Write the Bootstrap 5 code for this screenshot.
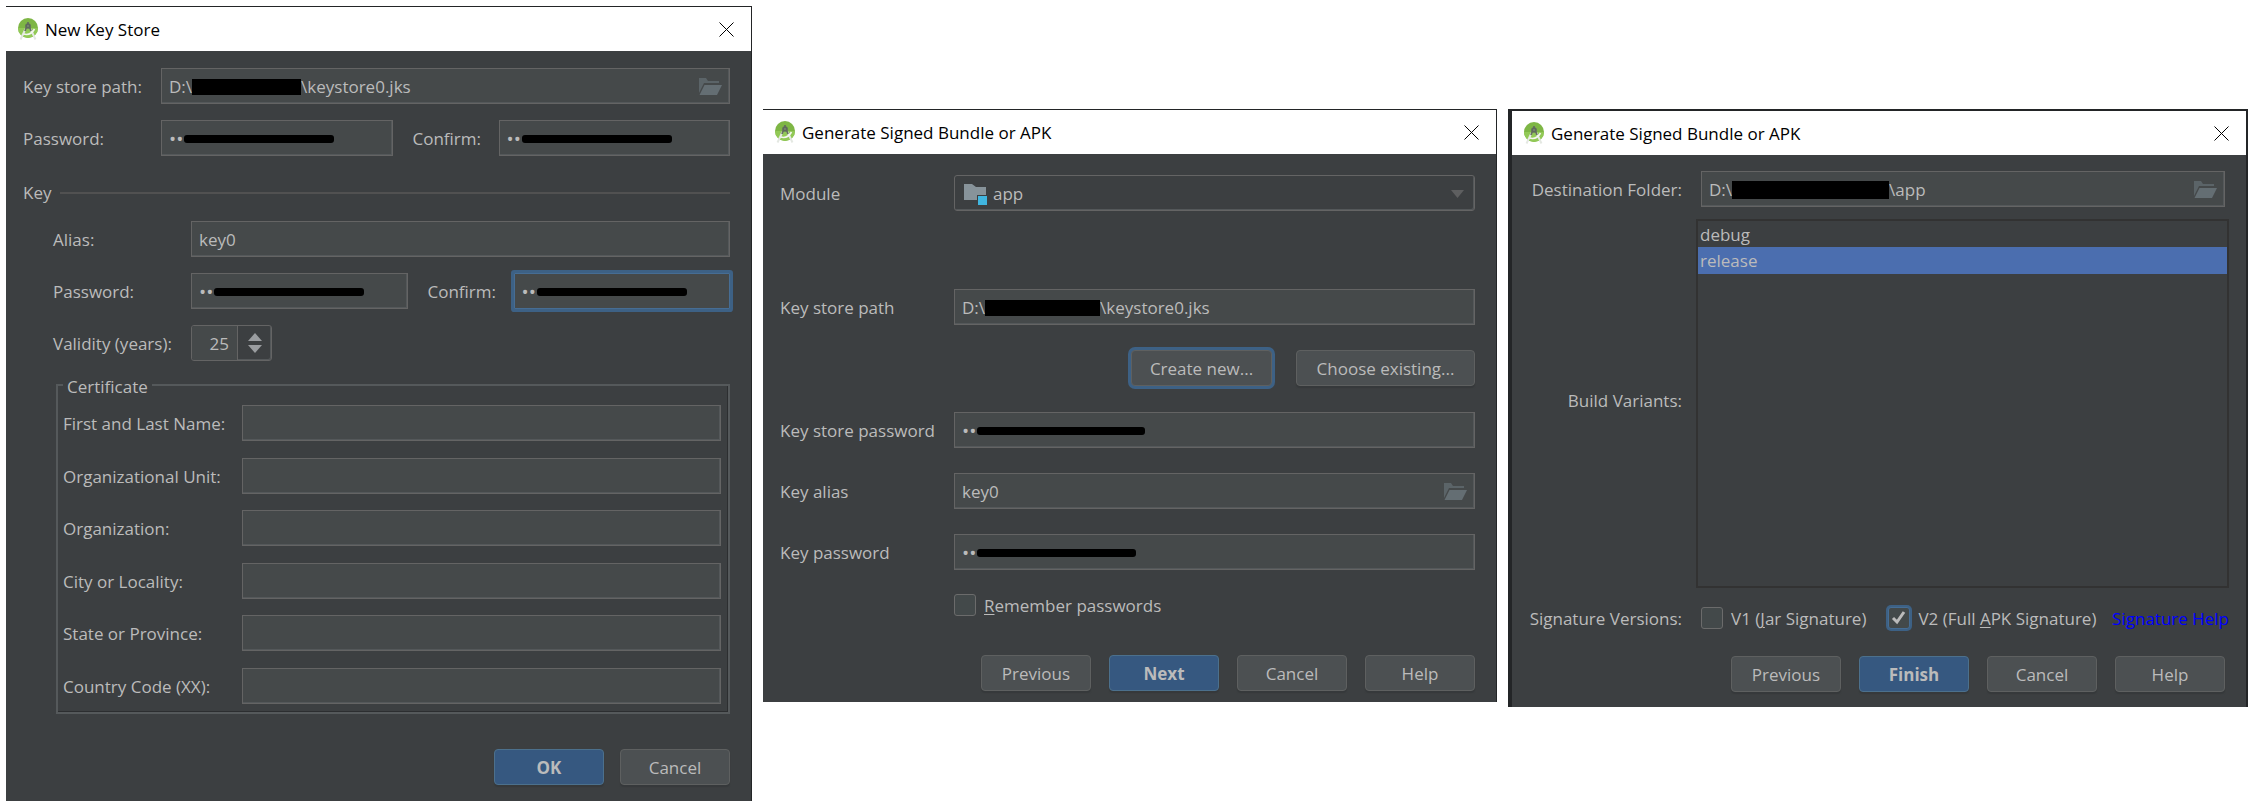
<!DOCTYPE html>
<html lang="en">
<head>
<meta charset="utf-8">
<meta name="viewport" content="width=device-width, initial-scale=1">
<title>Generate Signed Bundle or APK</title>
<link href="https://cdn.jsdelivr.net/npm/bootstrap@5.3.0/dist/css/bootstrap.min.css" rel="stylesheet">
<style>
  body { background: #fff; color: #bbb; font-family: "Open Sans", "Noto Sans", sans-serif; font-size: 17px; line-height: 24px; }
  .desk { display: grid; grid-template-columns: 746fr 734fr 740fr; column-gap: 11px; align-items: start; padding: 6px 7px 4px 6px; }
  .lowered { margin-top: 103px; }
  .dialog { background: #3c3f41; border: 0 solid #232527; border-width: 1px 1px 0 0; min-width: 0; }
  .dialog-thick { border-width: 2px 2px 0 4px; }
  .titlebar { background: #fff; color: #000; height: 44px; padding: 0 17px 0 11px; }
  .titlebar h1 { font-size: 17px; line-height: 24px; font-weight: 400; margin: 0 0 0 6px; padding-top: 1px; }
  .x-btn { border: 0; background: none; padding: 0; display: flex; }
  .pane { padding: 17px 21px 16px 17px; }
  .pane-wizard { padding: 21px 21px 11px 17px; }
  .pane-finish { padding: 16px 0 15px; }
  .gap-row { margin-top: 16px; }
  .gap-mid { margin-top: 25px; }
  .gap-wide { margin-top: 26px; }
  .indent { margin-left: 30px; }
  .lab { flex: none; width: 138px; padding-top: 2px; white-space: nowrap; }
  .lab-confirm { flex: none; width: 106px; padding: 2px 0 0 20px; }
  .lab-cert { width: 179px; }
  .lab-wizard { width: 174px; }
  .lab-end { width: 170px; text-align: right; }
  .field, .field:focus { flex: 1 1 0; min-width: 0; height: 36px; padding: 1px 7px 0; border: 1px solid #646464; border-radius: 0; background: #45494a; color: #bbb; font-size: 17px; line-height: 24px; box-shadow: inset -1px -1px #54585a; }
  .field input { border: 0; padding: 0; background: none; color: inherit; flex: 1 1 0; min-width: 0; outline: 0; }
  .field input[type=password] { flex: 0 0 15px; width: 15px; font-size: 19px; line-height: 24px; }
  .ring, .field.ring { border-color: #466d94; box-shadow: 0 0 0 3px #3d6185; border-radius: 1px; }
  .censor { flex: none; background: #000; height: 16px; width: 109px; }
  .censor-path { width: 115px; }
  .censor-folder { width: 157px; height: 18px; }
  .stroke { flex: none; background: #000; height: 8px; width: 150px; border-radius: 3px; }
  .stroke-store { width: 168px; }
  .stroke-key { width: 159px; }
  .section { margin-top: 25px; }
  .rule { height: 2px; background: #515151; flex: 1; margin-left: 9px; }
  .spin { width: 81px; height: 36px; border: 1px solid #646464; border-radius: 3px; overflow: hidden; box-shadow: inset -1px -1px #54585a; }
  .spin input { width: 46px; border: 0; border-right: 1px solid #646464; padding: 2px 8px 0 0; background: #45494a; color: #bbb; text-align: right; appearance: textfield; -moz-appearance: textfield; }
  .spin input::-webkit-inner-spin-button { appearance: none; -webkit-appearance: none; margin: 0; }
  .spin button { border: 0; background: none; padding: 0; height: 8px; display: flex; }
  .cert { margin: 10px 0 0 33px; border: 2px solid #55595b; padding: 6px 7px 8px 5px; box-shadow: inset -1px -1px #2c2e30; }
  .cert legend { padding: 4px 4px 0; font-size: 17px; line-height: 24px; margin: 0; }
  .cert-rows { min-height: 299px; }
  .btn-ide { width: 110px; height: 36px; padding: 1px 0 0; border: 1px solid #5e6060; border-radius: 4px; background: #4c5052; color: #bbb; font-size: 17px; line-height: 24px; box-shadow: 0 2px 1px #36393b; }
  .btn-main { background: #365880; border-color: #4c708c; font-weight: 700; }
  .btn-new { width: 141px; }
  .btn-new.ring { border-radius: 4px; box-shadow: 0 0 0 3px #3d6185; }
  .btn-old { width: 179px; margin-left: 24px; }
  .btn-row { gap: 18px; }
  .btn-row-two { gap: 16px; margin-top: 35px; }
  .wizard-row { margin-top: 37px; }
  .combo { flex: 1; position: relative; }
  .combo select { width: 100%; height: 36px; padding: 2px 40px 0 38px; border: 1px solid #646464; border-radius: 3px; background: #3c3f41; color: #bbb; font-size: 17px; box-shadow: inset -1px -1px #54585a; }
  .combo .mark-module { position: absolute; left: 10px; top: 8px; }
  .combo .mark-arrow { position: absolute; right: 11px; top: 15px; }
  .after-combo { margin-top: 78px; }
  .tick { flex: none; width: 22px; height: 22px; margin: 0 8px 0 0; border: 1px solid #6b6b6b; background-color: #43494a; }
  .tick.form-check-input[type=checkbox] { border-radius: 3px; }
  .tick + label { padding-top: 2px; }
  .tick.tick:checked { background-color: #43494a; border-color: #466d94; box-shadow: 0 0 0 2px #3d6185; background-size: 20px 20px; background-image: url("data:image/svg+xml,%3Csvg xmlns='http://www.w3.org/2000/svg' viewBox='0 0 20 20'%3E%3Cpath d='M4 10l4 4L15 4' fill='none' stroke='%23bbb' stroke-width='3'/%3E%3C/svg%3E"); }
  .remember { margin-top: 22px; }
  u { text-underline-offset: 2px; text-decoration-thickness: 1px; }
  .inset-field { margin-left: 19px; margin-right: 21px; }
  .variants { flex: 1; margin: 0 17px 0 14px; min-height: 369px; border: 2px solid #323232; border-radius: 0; }
  .variants .list-group-item { border: 0; margin: 0; padding: 2px 2px 1px; background: none; color: #bbb; border-radius: 0; }
  .variants .list-group-item.active { background: #4b6eaf; color: #bbb; }
  .signatures { margin: 17px 17px 0 0; white-space: nowrap; }
  .signatures a { color: #00f; text-decoration: none; padding-top: 2px; }
  .first-tick { margin-left: 19px; }
  .next-tick { margin-left: 22px; }
</style>
</head>
<body>
<svg width="0" height="0" class="position-absolute" aria-hidden="true">
  <symbol id="studio" viewBox="0 0 22 24">
    <circle cx="11" cy="11" r="10" fill="#7eb645"/>
    <path d="M1 11a10 10 0 0 0 20 0z" fill="#92c956"/>
    <path d="M8.500 12L3.500 22.500M13.500 12l5 10.500" stroke="#e4e8e2" stroke-width="2" fill="none"/>
    <path d="M6.500 17q7 2 11-5" stroke="#f4f7f1" stroke-width="1.600" fill="none"/>
    <path d="M11 5v3M9.500 10l-1.500 4M12.500 10l1.500 4" stroke="#66705f" stroke-width="1.800"/>
    <circle cx="11" cy="9" r="2.800" fill="#5f6a5d"/>
    <circle cx="11" cy="9" r=".9" fill="#7d8c74"/>
  </symbol>
  <symbol id="close" viewBox="0 0 15 15"><path d="M.5.5l14 14M14.500.5l-14 14" stroke="#000" stroke-width="1"/></symbol>
  <symbol id="folder" viewBox="0 0 23 17">
    <path d="M0 0h7l2 3h11v2H5L0 15z" fill="#5b6468"/>
    <path d="M5.500 7H23l-5 10H.5z" fill="#646e73"/>
  </symbol>
</svg>

<main class="desk">
  <form class="dialog">
    <header class="titlebar d-flex align-items-center">
      <svg width="22" height="24" aria-hidden="true"><use href="#studio"/></svg>
      <h1>New Key Store</h1>
      <button type="button" class="x-btn ms-auto" aria-label="Close"><svg width="15" height="15"><use href="#close"/></svg></button>
    </header>
    <div class="pane">
      <div class="d-flex align-items-center">
        <label class="lab" for="ksPath">Key store path:</label>
        <div class="field d-flex align-items-center"><span>D:\</span><span class="censor"></span><input id="ksPath" type="text" value="\keystore0.jks"><svg width="23" height="17"><use href="#folder"/></svg></div>
      </div>
      <div class="d-flex align-items-center gap-row">
        <label class="lab" for="ksPw">Password:</label>
        <div class="field d-flex align-items-center"><input id="ksPw" type="password" value="00"><span class="stroke"></span></div>
        <label class="lab-confirm" for="ksPw2">Confirm:</label>
        <div class="field d-flex align-items-center"><input id="ksPw2" type="password" value="00"><span class="stroke"></span></div>
      </div>
      <div class="d-flex align-items-center section"><span>Key</span><span class="rule"></span></div>
      <div class="indent">
        <div class="d-flex align-items-center gap-row">
          <label class="lab" for="alias">Alias:</label>
          <input id="alias" class="form-control field" type="text" value="key0">
        </div>
        <div class="d-flex align-items-center gap-row">
          <label class="lab" for="keyPw">Password:</label>
          <div class="field d-flex align-items-center"><input id="keyPw" type="password" value="00"><span class="stroke"></span></div>
          <label class="lab-confirm" for="keyPw2">Confirm:</label>
          <div class="field ring d-flex align-items-center"><input id="keyPw2" type="password" value="00"><span class="stroke"></span></div>
        </div>
        <div class="d-flex align-items-center gap-row">
          <label class="lab" for="years">Validity (years):</label>
          <div class="spin d-flex">
            <input id="years" type="number" value="25">
            <div class="flex-grow-1 d-flex flex-column align-items-center justify-content-center gap-1">
              <button type="button" aria-label="More years"><svg width="14" height="8"><path d="M0 8L7 0l7 8z" fill="#9a9da0"/></svg></button>
              <button type="button" aria-label="Fewer years"><svg width="14" height="8"><path d="M0 0l7 8 7-8z" fill="#9a9da0"/></svg></button>
            </div>
          </div>
        </div>
      </div>
      <fieldset class="cert">
        <legend class="float-none w-auto">Certificate</legend>
        <div class="cert-rows d-flex flex-column justify-content-between">
          <div class="d-flex align-items-center"><label class="lab lab-cert" for="cn">First and Last Name:</label><input id="cn" class="form-control field" type="text"></div>
          <div class="d-flex align-items-center"><label class="lab lab-cert" for="ou">Organizational Unit:</label><input id="ou" class="form-control field" type="text"></div>
          <div class="d-flex align-items-center"><label class="lab lab-cert" for="org">Organization:</label><input id="org" class="form-control field" type="text"></div>
          <div class="d-flex align-items-center"><label class="lab lab-cert" for="city">City or Locality:</label><input id="city" class="form-control field" type="text"></div>
          <div class="d-flex align-items-center"><label class="lab lab-cert" for="state">State or Province:</label><input id="state" class="form-control field" type="text"></div>
          <div class="d-flex align-items-center"><label class="lab lab-cert" for="country">Country Code (XX):</label><input id="country" class="form-control field" type="text"></div>
        </div>
      </fieldset>
      <div class="d-flex justify-content-end btn-row-two">
        <button type="button" class="btn btn-ide btn-main">OK</button>
        <button type="button" class="btn btn-ide">Cancel</button>
      </div>
    </div>
  </form>

  <form class="dialog lowered">
    <header class="titlebar d-flex align-items-center">
      <svg width="22" height="24" aria-hidden="true"><use href="#studio"/></svg>
      <h1>Generate Signed Bundle or APK</h1>
      <button type="button" class="x-btn ms-auto" aria-label="Close"><svg width="15" height="15"><use href="#close"/></svg></button>
    </header>
    <div class="pane-wizard">
      <div class="d-flex align-items-center">
        <label class="lab lab-wizard" for="module">Module</label>
        <div class="combo">
          <select id="module" class="form-select"><option>app</option></select>
          <svg class="mark-module" width="23" height="22"><path d="M0 1h8l4 3h10v8h-9v5H0z" fill="#87939a"/><path d="M14 13h9v9h-9z" fill="#40b6e0"/></svg>
          <svg class="mark-arrow" width="13" height="8"><path d="M0 0h13L6.500 8z" fill="#5e5f60"/></svg>
        </div>
      </div>
      <div class="d-flex align-items-center after-combo">
        <label class="lab lab-wizard" for="path">Key store path</label>
        <div class="field d-flex align-items-center"><span>D:\</span><span class="censor censor-path"></span><input id="path" type="text" value="\keystore0.jks"></div>
      </div>
      <div class="d-flex justify-content-end gap-mid">
        <button type="button" class="btn btn-ide btn-new ring">Create new...</button>
        <button type="button" class="btn btn-ide btn-old">Choose existing...</button>
      </div>
      <div class="d-flex align-items-center gap-wide">
        <label class="lab lab-wizard" for="storePw">Key store password</label>
        <div class="field d-flex align-items-center"><input id="storePw" type="password" value="00"><span class="stroke stroke-store"></span></div>
      </div>
      <div class="d-flex align-items-center gap-mid">
        <label class="lab lab-wizard" for="keyAlias">Key alias</label>
        <div class="field d-flex align-items-center"><input id="keyAlias" type="text" value="key0"><svg width="23" height="17"><use href="#folder"/></svg></div>
      </div>
      <div class="d-flex align-items-center gap-mid">
        <label class="lab lab-wizard" for="aliasPw">Key password</label>
        <div class="field d-flex align-items-center"><input id="aliasPw" type="password" value="00"><span class="stroke stroke-key"></span></div>
      </div>
      <div class="d-flex align-items-center remember">
        <span class="lab lab-wizard"></span>
        <input id="remember" class="form-check-input tick" type="checkbox"><label for="remember"><u>R</u>emember passwords</label>
      </div>
      <div class="d-flex justify-content-end btn-row wizard-row">
        <button type="button" class="btn btn-ide">Previous</button>
        <button type="button" class="btn btn-ide btn-main">Next</button>
        <button type="button" class="btn btn-ide">Cancel</button>
        <button type="button" class="btn btn-ide">Help</button>
      </div>
    </div>
  </form>

  <form class="dialog dialog-thick lowered">
    <header class="titlebar d-flex align-items-center">
      <svg width="22" height="24" aria-hidden="true"><use href="#studio"/></svg>
      <h1>Generate Signed Bundle or APK</h1>
      <button type="button" class="x-btn ms-auto" aria-label="Close"><svg width="15" height="15"><use href="#close"/></svg></button>
    </header>
    <div class="pane-finish">
      <div class="d-flex align-items-center">
        <label class="lab lab-end" for="dest">Destination Folder:</label>
        <div class="field inset-field d-flex align-items-center"><span>D:\</span><span class="censor censor-folder"></span><input id="dest" type="text" value="\app"><svg width="23" height="17"><use href="#folder"/></svg></div>
      </div>
      <div class="d-flex align-items-center mt-2 pt-1">
        <span class="lab lab-end pb-2" id="variantsLabel">Build Variants:</span>
        <ul class="list-group variants" role="listbox" aria-labelledby="variantsLabel">
          <li class="list-group-item" role="option">debug</li>
          <li class="list-group-item active" role="option" aria-selected="true">release</li>
        </ul>
      </div>
      <div class="d-flex align-items-center signatures">
        <span class="lab lab-end">Signature Versions:</span>
        <input id="v1" class="form-check-input tick first-tick" type="checkbox"><label for="v1">V1 (<u>J</u>ar Signature)</label>
        <input id="v2" class="form-check-input tick next-tick" type="checkbox" checked><label for="v2">V2 (Full <u>A</u>PK Signature)</label>
        <a class="ms-auto" href="#">Signature Help</a>
      </div>
      <div class="d-flex justify-content-end btn-row gap-mid inset-field">
        <button type="button" class="btn btn-ide">Previous</button>
        <button type="button" class="btn btn-ide btn-main">Finish</button>
        <button type="button" class="btn btn-ide">Cancel</button>
        <button type="button" class="btn btn-ide">Help</button>
      </div>
    </div>
  </form>
</main>
<script src="https://cdn.jsdelivr.net/npm/bootstrap@5.3.0/dist/js/bootstrap.bundle.min.js"></script>
</body>
</html>
